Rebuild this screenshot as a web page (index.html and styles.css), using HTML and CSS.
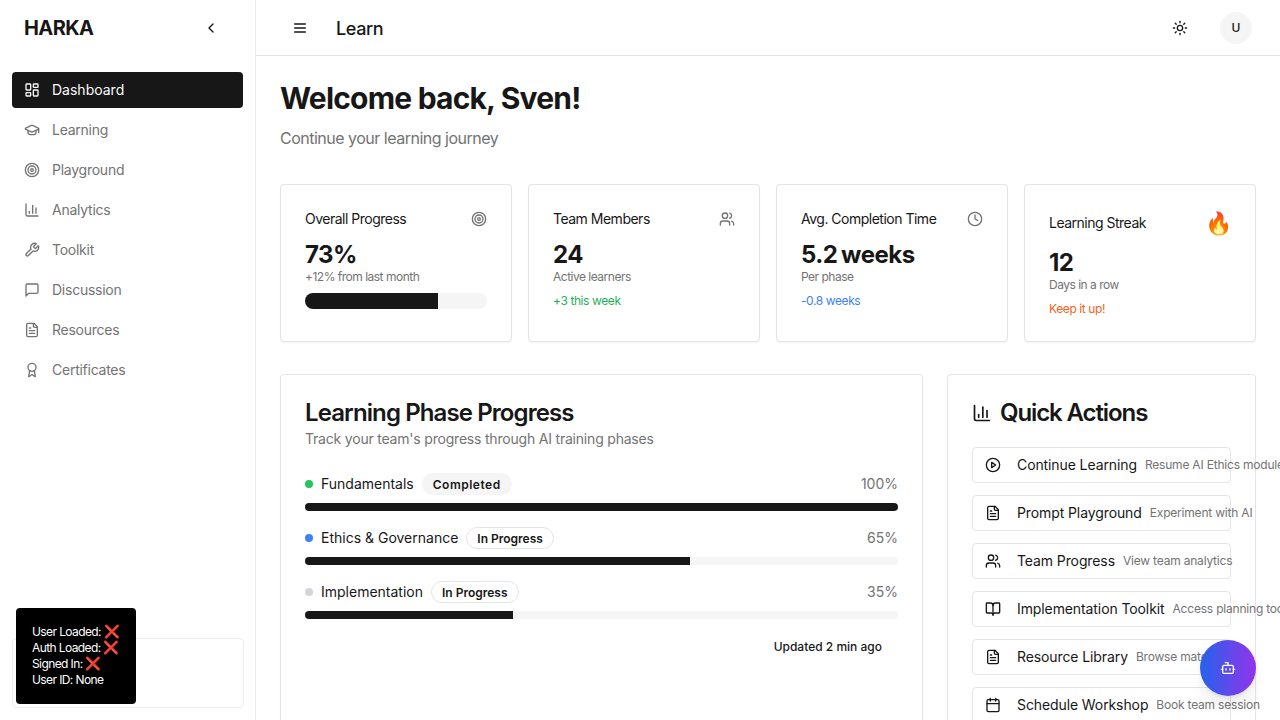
FILE: index.html
```html
<!DOCTYPE html>
<html lang="en">
<head>
  <meta charset="UTF-8">
  <meta name="viewport" content="width=device-width, initial-scale=1.0">
  <title>HARKA - Learn</title>
  <link rel="stylesheet" href="styles.css">
</head>
<body>
  <svg class="icon-defs" aria-hidden="true">
    <symbol id="i-dashboard" viewBox="0 0 24 24"><rect x="3" y="3" width="7" height="9" rx="1"/><rect x="14" y="3" width="7" height="5" rx="1"/><rect x="14" y="12" width="7" height="9" rx="1"/><rect x="3" y="16" width="7" height="5" rx="1"/></symbol>
    <symbol id="i-cap" viewBox="0 0 24 24"><path d="M21.42 10.922a1 1 0 0 0-.019-1.838L12.83 5.18a2 2 0 0 0-1.66 0L2.6 9.08a1 1 0 0 0 0 1.832l8.57 3.908a2 2 0 0 0 1.66 0z"/><path d="M22 10v6"/><path d="M6 12.5V16a6 3 0 0 0 12 0v-3.5"/></symbol>
    <symbol id="i-target" viewBox="0 0 24 24"><circle cx="12" cy="12" r="10"/><circle cx="12" cy="12" r="6"/><circle cx="12" cy="12" r="2"/></symbol>
    <symbol id="i-chart" viewBox="0 0 24 24"><path d="M3 3v16a2 2 0 0 0 2 2h16"/><path d="M18 17V9"/><path d="M13 17V5"/><path d="M8 17v-3"/></symbol>
    <symbol id="i-wrench" viewBox="0 0 24 24"><path d="M14.7 6.3a1 1 0 0 0 0 1.4l1.6 1.6a1 1 0 0 0 1.4 0l3.77-3.77a6 6 0 0 1-7.94 7.94l-6.91 6.91a2.12 2.12 0 0 1-3-3l6.91-6.91a6 6 0 0 1 7.94-7.94l-3.76 3.76z"/></symbol>
    <symbol id="i-message" viewBox="0 0 24 24"><path d="M21 15a2 2 0 0 1-2 2H7l-4 4V5a2 2 0 0 1 2-2h14a2 2 0 0 1 2 2z"/></symbol>
    <symbol id="i-file" viewBox="0 0 24 24"><path d="M15 2H6a2 2 0 0 0-2 2v16a2 2 0 0 0 2 2h12a2 2 0 0 0 2-2V7Z"/><path d="M14 2v4a2 2 0 0 0 2 2h4"/><path d="M10 9H8"/><path d="M16 13H8"/><path d="M16 17H8"/></symbol>
    <symbol id="i-award" viewBox="0 0 24 24"><path d="m15.477 12.89 1.515 8.526a.5.5 0 0 1-.81.47l-3.58-2.687a1 1 0 0 0-1.197 0l-3.586 2.686a.5.5 0 0 1-.81-.469l1.514-8.526"/><circle cx="12" cy="8" r="6"/></symbol>
    <symbol id="i-users" viewBox="0 0 24 24"><path d="M16 21v-2a4 4 0 0 0-4-4H6a4 4 0 0 0-4 4v2"/><circle cx="9" cy="7" r="4"/><path d="M22 21v-2a4 4 0 0 0-3-3.87"/><path d="M16 3.13a4 4 0 0 1 0 7.75"/></symbol>
    <symbol id="i-clock" viewBox="0 0 24 24"><circle cx="12" cy="12" r="10"/><polyline points="12 6 12 12 16 14"/></symbol>
    <symbol id="i-play" viewBox="0 0 24 24"><circle cx="12" cy="12" r="10"/><polygon points="10 8 16 12 10 16 10 8"/></symbol>
    <symbol id="i-book" viewBox="0 0 24 24"><path d="M12 7v14"/><path d="M3 18a1 1 0 0 1-1-1V4a1 1 0 0 1 1-1h5a4 4 0 0 1 4 4 4 4 0 0 1 4-4h5a1 1 0 0 1 1 1v13a1 1 0 0 1-1 1h-6a3 3 0 0 0-3 3 3 3 0 0 0-3-3z"/></symbol>
    <symbol id="i-calendar" viewBox="0 0 24 24"><path d="M8 2v4"/><path d="M16 2v4"/><rect x="3" y="4" width="18" height="18" rx="2"/><path d="M3 10h18"/></symbol>
    <symbol id="i-bot" viewBox="0 0 24 24"><path d="M12 8V4H8"/><rect x="4" y="8" width="16" height="12" rx="2"/><path d="M2 14h2"/><path d="M20 14h2"/><path d="M15 13v2"/><path d="M9 13v2"/></symbol>
    <symbol id="i-sun" viewBox="0 0 24 24"><circle cx="12" cy="12" r="4"/><path d="M12 2v2"/><path d="M12 20v2"/><path d="m4.93 4.93 1.41 1.41"/><path d="m17.66 17.66 1.41 1.41"/><path d="M2 12h2"/><path d="M20 12h2"/><path d="m6.34 17.66-1.41 1.41"/><path d="m19.07 4.93-1.41 1.41"/></symbol>
    <symbol id="i-menu" viewBox="0 0 24 24"><path d="M4 6h16"/><path d="M4 12h16"/><path d="M4 18h16"/></symbol>
    <symbol id="i-back" viewBox="0 0 24 24"><path d="m15 18-6-6 6-6"/></symbol>
  </svg>

  <div class="shell">
    <aside class="sidebar">
      <div class="brand">
        <span class="logo">HARKA</span>
        <button class="icon-btn"><svg class="icon"><use href="#i-back"/></svg></button>
      </div>
      <nav class="nav">
        <a class="nav-item active"><svg class="icon"><use href="#i-dashboard"/></svg><span>Dashboard</span></a>
        <a class="nav-item"><svg class="icon"><use href="#i-cap"/></svg><span>Learning</span></a>
        <a class="nav-item"><svg class="icon"><use href="#i-target"/></svg><span>Playground</span></a>
        <a class="nav-item"><svg class="icon"><use href="#i-chart"/></svg><span>Analytics</span></a>
        <a class="nav-item"><svg class="icon"><use href="#i-wrench"/></svg><span>Toolkit</span></a>
        <a class="nav-item"><svg class="icon"><use href="#i-message"/></svg><span>Discussion</span></a>
        <a class="nav-item"><svg class="icon"><use href="#i-file"/></svg><span>Resources</span></a>
        <a class="nav-item"><svg class="icon"><use href="#i-award"/></svg><span>Certificates</span></a>
      </nav>
      <div class="user-box"></div>
    </aside>

    <div class="page">
      <header class="topbar">
        <button class="icon-btn"><svg class="icon"><use href="#i-menu"/></svg></button>
        <span class="topbar-title">Learn</span>
        <div class="topbar-right">
          <button class="icon-btn"><svg class="icon"><use href="#i-sun"/></svg></button>
          <div class="avatar">U</div>
        </div>
      </header>

      <main class="content">
        <h1 class="welcome">Welcome back, Sven!</h1>
        <p class="welcome-sub">Continue your learning journey</p>

        <section class="stats">
          <div class="card stat">
            <div class="stat-head"><span>Overall Progress</span><svg class="icon muted"><use href="#i-target"/></svg></div>
            <div class="stat-value">73%</div>
            <div class="stat-sub">+12% from last month</div>
            <div class="stat-bar"><div class="fill" style="width: 73%"></div></div>
          </div>
          <div class="card stat">
            <div class="stat-head"><span>Team Members</span><svg class="icon muted"><use href="#i-users"/></svg></div>
            <div class="stat-value">24</div>
            <div class="stat-sub">Active learners</div>
            <div class="stat-note green">+3 this week</div>
          </div>
          <div class="card stat">
            <div class="stat-head"><span>Avg. Completion Time</span><svg class="icon muted"><use href="#i-clock"/></svg></div>
            <div class="stat-value">5.2 weeks</div>
            <div class="stat-sub">Per phase</div>
            <div class="stat-note blue">-0.8 weeks</div>
          </div>
          <div class="card stat">
            <div class="stat-head streak"><span>Learning Streak</span><span class="flame">🔥</span></div>
            <div class="stat-value">12</div>
            <div class="stat-sub">Days in a row</div>
            <div class="stat-note orange">Keep it up!</div>
          </div>
        </section>

        <section class="columns">
          <div class="card panel">
            <h2 class="panel-title">Learning Phase Progress</h2>
            <p class="panel-sub">Track your team's progress through AI training phases</p>
            <div class="phases">
              <div class="phase">
                <div class="phase-head">
                  <span class="dot dot-green"></span>
                  <span class="phase-name">Fundamentals</span>
                  <span class="pill pill-solid">Completed</span>
                  <span class="phase-pct">100%</span>
                </div>
                <div class="phase-bar"><div class="fill" style="width: 100%"></div></div>
              </div>
              <div class="phase">
                <div class="phase-head">
                  <span class="dot dot-blue"></span>
                  <span class="phase-name">Ethics &amp; Governance</span>
                  <span class="pill">In Progress</span>
                  <span class="phase-pct">65%</span>
                </div>
                <div class="phase-bar"><div class="fill" style="width: 65%"></div></div>
              </div>
              <div class="phase">
                <div class="phase-head">
                  <span class="dot dot-gray"></span>
                  <span class="phase-name">Implementation</span>
                  <span class="pill">In Progress</span>
                  <span class="phase-pct">35%</span>
                </div>
                <div class="phase-bar"><div class="fill" style="width: 35%"></div></div>
              </div>
            </div>
            <div class="updated">Updated 2 min ago</div>
          </div>

          <div class="card panel">
            <h2 class="panel-title with-icon"><svg class="icon icon-lg"><use href="#i-chart"/></svg>Quick Actions</h2>
            <div class="actions">
              <button class="action"><svg class="icon"><use href="#i-play"/></svg><span class="action-name">Continue Learning</span><span class="action-desc">Resume AI Ethics module</span></button>
              <button class="action"><svg class="icon"><use href="#i-file"/></svg><span class="action-name">Prompt Playground</span><span class="action-desc">Experiment with AI</span></button>
              <button class="action"><svg class="icon"><use href="#i-users"/></svg><span class="action-name">Team Progress</span><span class="action-desc">View team analytics</span></button>
              <button class="action"><svg class="icon"><use href="#i-book"/></svg><span class="action-name">Implementation Toolkit</span><span class="action-desc">Access planning tools</span></button>
              <button class="action"><svg class="icon"><use href="#i-file"/></svg><span class="action-name">Resource Library</span><span class="action-desc">Browse materials</span></button>
              <button class="action"><svg class="icon"><use href="#i-calendar"/></svg><span class="action-name">Schedule Workshop</span><span class="action-desc">Book team session</span></button>
            </div>
          </div>
        </section>
      </main>
    </div>
  </div>

  <div class="debug">
    <div>User Loaded: <span class="cross">❌</span></div>
    <div>Auth Loaded: <span class="cross">❌</span></div>
    <div>Signed In: <span class="cross">❌</span></div>
    <div>User ID: None</div>
  </div>

  <button class="fab"><svg class="icon"><use href="#i-bot"/></svg></button>
</body>
</html>
```

FILE: styles.css
```css
* {
  box-sizing: border-box;
}

body {
  margin: 0;
  font-family: "Inter", "Noto Sans", sans-serif;
  background: #FFFFFF;
  color: #171717;
  height: 100vh;
  overflow: hidden;
}

button {
  font-family: inherit;
  color: inherit;
  background: none;
  border: none;
  padding: 0;
}

.icon-defs {
  display: none;
}

.icon {
  width: 16px;
  height: 16px;
  flex-shrink: 0;
  fill: none;
  stroke: currentColor;
  stroke-width: 2;
  stroke-linecap: round;
  stroke-linejoin: round;
}

.icon-lg {
  width: 20px;
  height: 20px;
}

.muted {
  color: #737373;
}

.shell {
  display: flex;
  height: 100vh;
}

/* Sidebar */
.sidebar {
  width: 256px;
  flex-shrink: 0;
  display: flex;
  flex-direction: column;
  border-right: 1px solid #EBEBEB;
}

.brand {
  height: 56px;
  display: flex;
  align-items: center;
  justify-content: space-between;
  padding: 0 24px;
}

.logo {
  font-size: 20px;
  font-weight: 700;
  letter-spacing: -0.6px;
}

.icon-btn {
  width: 40px;
  height: 40px;
  display: flex;
  align-items: center;
  justify-content: center;
}

.nav {
  display: flex;
  flex-direction: column;
  gap: 4px;
  padding: 16px 12px 0;
}

.nav-item {
  height: 36px;
  display: flex;
  align-items: center;
  gap: 12px;
  padding: 0 12px;
  border-radius: 4px;
  font-size: 14px;
  letter-spacing: -0.25px;
  color: #737373;
}

.nav-item span {
  margin-top: -1px;
}

.nav-item.active {
  background: #171717;
  color: #FAFAFA;
  letter-spacing: 0;
}

.user-box {
  height: 70px;
  margin: auto 11px 12px 12px;
  border: 1px solid #EEEEEE;
  border-radius: 4px;
}

/* Top bar */
.page {
  flex: 1;
  min-width: 0;
  display: flex;
  flex-direction: column;
}

.topbar {
  height: 56px;
  flex-shrink: 0;
  display: flex;
  align-items: center;
  gap: 16px;
  padding: 0 28px 0 24px;
  border-bottom: 1px solid #E5E5E5;
}

.topbar-title {
  padding-top: 2px;
  font-size: 18px;
  font-weight: 500;
  letter-spacing: -0.4px;
}

.topbar-right {
  margin-left: auto;
  display: flex;
  align-items: center;
  gap: 20px;
}

.avatar {
  width: 32px;
  height: 32px;
  border-radius: 50%;
  background: #F5F5F5;
  display: flex;
  align-items: center;
  justify-content: center;
  font-size: 12px;
  font-weight: 500;
}

/* Content */
.content {
  flex: 1;
  min-height: 0;
  overflow: hidden;
  padding: 24px;
}

.welcome {
  margin: 0 0 10px;
  font-size: 30px;
  line-height: 36px;
  font-weight: 700;
  letter-spacing: -0.8px;
}

.welcome-sub {
  margin: 0 0 34px;
  font-size: 16px;
  line-height: 24px;
  letter-spacing: -0.5px;
  color: #737373;
}

.card {
  background: #FFFFFF;
  border: 1px solid #E5E5E5;
  border-radius: 4px;
  box-shadow: 0 1px 2px rgba(0, 0, 0, 0.05);
}

.stats {
  display: grid;
  grid-template-columns: repeat(4, 1fr);
  gap: 16px;
  margin-bottom: 32px;
}

.stat {
  padding: 24px;
}

.stat-head {
  display: flex;
  align-items: center;
  justify-content: space-between;
  height: 20px;
  margin-bottom: 8px;
  font-size: 14px;
  letter-spacing: -0.5px;
}

.stat-head > span:first-child {
  margin-top: -1px;
}

.stat-head.streak {
  height: 28px;
}

.flame {
  font-size: 22px;
  line-height: 28px;
}

.stat-value {
  height: 32px;
  font-size: 24px;
  line-height: 36px;
  font-weight: 700;
  letter-spacing: -0.5px;
  word-spacing: -1.5px;
}

.stat-sub {
  font-size: 12px;
  line-height: 16px;
  letter-spacing: -0.5px;
  color: #737373;
}

.stat-note {
  margin-top: 8px;
  font-size: 12px;
  line-height: 16px;
  letter-spacing: -0.4px;
}

.green {
  color: #1FAF5A;
}

.blue {
  color: #3B82F6;
}

.orange {
  color: #EF6420;
}

.stat-bar {
  height: 16px;
  margin-top: 8px;
  border-radius: 999px;
  background: #F5F5F5;
  overflow: hidden;
}

.fill {
  height: 100%;
  background: #171717;
}

.columns {
  display: grid;
  grid-template-columns: 643px 309px;
  gap: 24px;
}

.panel {
  padding: 24px;
}

.panel-title {
  margin: 0;
  font-size: 24px;
  line-height: 28px;
  font-weight: 600;
  letter-spacing: -0.9px;
}

.with-icon {
  display: flex;
  align-items: center;
  gap: 8px;
  letter-spacing: -1.1px;
}

.panel-sub {
  margin: 2px 0 0;
  font-size: 14px;
  line-height: 20px;
  letter-spacing: -0.2px;
  color: #737373;
}

.phases {
  display: flex;
  flex-direction: column;
  gap: 16px;
  margin-top: 24px;
}

.phase-head {
  display: flex;
  align-items: center;
  gap: 8px;
  height: 22px;
  margin-bottom: 8px;
}

.dot {
  width: 8px;
  height: 8px;
  border-radius: 50%;
}

.dot-green {
  background: #22C55E;
}

.dot-blue {
  background: #3B82F6;
}

.dot-gray {
  background: #D1D5DB;
}

.phase-name {
  margin-top: -1px;
  font-size: 14px;
}

.pill {
  height: 22px;
  display: flex;
  align-items: center;
  padding: 0 10px;
  border: 1px solid #E5E5E5;
  border-radius: 999px;
  font-size: 12px;
  font-weight: 600;
}

.pill-solid {
  background: #F5F5F5;
  border-color: transparent;
  letter-spacing: 0.5px;
}

.phase-pct {
  margin-left: auto;
  margin-top: -1px;
  font-size: 14px;
  color: #737373;
}

.phase-bar {
  height: 8px;
  border-radius: 999px;
  background: #F5F5F5;
  overflow: hidden;
}

.updated {
  margin: 20px 16px 0 0;
  text-align: right;
  font-size: 12px;
  line-height: 16px;
  font-weight: 500;
}

.actions {
  display: flex;
  flex-direction: column;
  gap: 12px;
  margin-top: 20px;
}

.action {
  height: 36px;
  display: flex;
  align-items: center;
  padding: 0 12px;
  border: 1px solid #E5E5E5;
  border-radius: 4px;
  white-space: nowrap;
  text-align: left;
}

.action-name {
  margin: -1px 0 0 16px;
  font-size: 14px;
  letter-spacing: -0.1px;
}

.action-desc {
  margin: -1px 0 0 8px;
  font-size: 12px;
  letter-spacing: -0.2px;
  color: #737373;
}

/* Overlays */
.debug {
  position: fixed;
  left: 16px;
  bottom: 16px;
  width: 120px;
  padding: 16px;
  background: #000000;
  color: #FFFFFF;
  border-radius: 4px;
  font-size: 12px;
  line-height: 16px;
  letter-spacing: -0.6px;
  white-space: nowrap;
}

.debug div {
  height: 16px;
}

.cross {
  font-size: 13px;
  line-height: 0;
}

.fab {
  position: fixed;
  right: 24px;
  bottom: 24px;
  width: 56px;
  height: 56px;
  display: flex;
  align-items: center;
  justify-content: center;
  border-radius: 50%;
  background: linear-gradient(to right, #2563EB, #9333EA);
  color: #FFFFFF;
  box-shadow: 0 10px 15px -3px rgba(0, 0, 0, 0.1), 0 4px 6px -4px rgba(0, 0, 0, 0.1);
}
```
